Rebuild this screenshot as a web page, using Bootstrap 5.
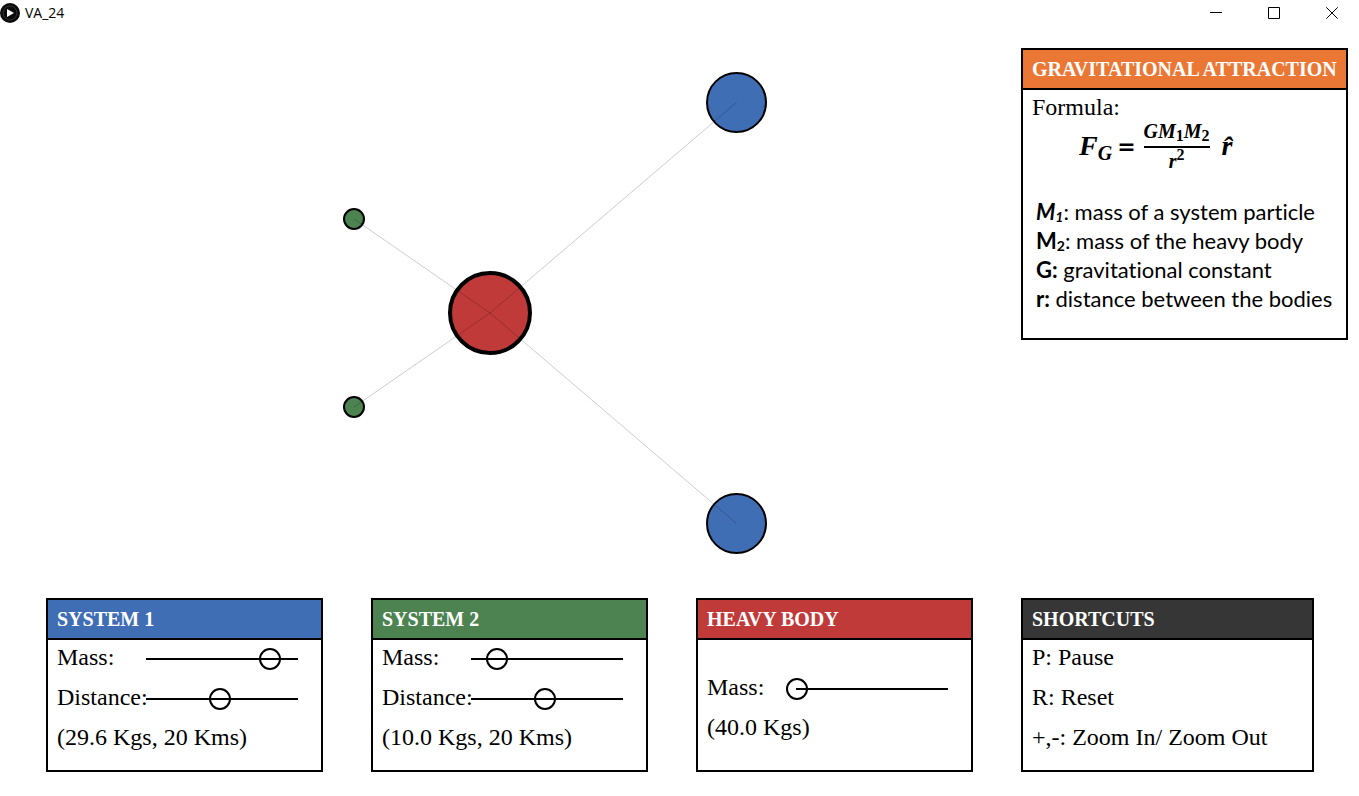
<!DOCTYPE html>
<html lang="en">
<head>
<meta charset="utf-8">
<meta name="viewport" content="width=device-width, initial-scale=1">
<title>VA_24</title>
<link href="https://cdn.jsdelivr.net/npm/bootstrap@5.3.0/dist/css/bootstrap.min.css" rel="stylesheet">
<style>
  body { background: #fff; color: #000; font-family: "Liberation Serif", "Times New Roman", serif; font-size: 24px; }
  .title-bar { height: 27px; padding-bottom: 1px; font-family: "Open Sans", "Segoe UI", sans-serif; font-size: 14px; line-height: 26px; }
  .title-bar .app-name { padding-left: 5px; }
  .win-btn { width: 54px; height: 26px; line-height: 0; }
  .scene { min-width: 0; }
  .formula-col { padding: 21px 11px 0 0; }
  .panel { border: 2px solid #000; border-radius: 0; background: #fff; color: #000; }
  .panel-title { border-bottom: 2px solid #000; border-radius: 0; padding: 0 9px; margin: 0; color: #fff; font-size: 20px; font-weight: 700; line-height: 38px; white-space: nowrap; }
  .bg-orange { background: #eb7735; }
  .bg-blue { background: #406eb5; }
  .bg-green { background: #4c8350; }
  .bg-red { background: #c03a3a; }
  .bg-coal { background: #363636; }
  .panel-rows { min-height: 130px; padding: 0 13px 0 9px; gap: 2px; }
  .panel-rows.lowered { padding-top: 30px; }
  .line-item { height: 38px; line-height: 34px; white-space: nowrap; }
  .slider-row { display: grid; grid-template-columns: 79px 1fr; }
  .slider {
    height: 38px; width: 100%; min-width: 0;
    background: linear-gradient(#000, #000) center / calc(100% - 20px) 2px no-repeat;
  }
  .slider::-webkit-slider-runnable-track { background: transparent; height: 22px; }
  .slider::-webkit-slider-thumb { width: 22px; height: 22px; margin-top: 0; background: transparent; border: 2px solid #000; }
  .slider::-webkit-slider-thumb:active { background: transparent; }
  .slider::-moz-range-track { background: transparent; }
  .slider::-moz-range-thumb { width: 22px; height: 22px; background: transparent; border: 2px solid #000; }
  .panels { padding: 0 13px 24px 46px; }
  .panels > div { padding-right: 48px; }
  .panels > div:last-child { padding-right: 32px; }
  .formula-body { width: 323px; min-height: 248px; padding: 0 9px; }
  .equation { padding-left: 47px; height: 48px; margin-top: -6px; font-weight: 700; font-style: italic; font-size: 28px; line-height: 28px; }
  .equation sub, .equation sup { line-height: 0; }
  .equation .big-sub { font-size: 20px; }
  .equation .equals { font-family: "DejaVu Serif", serif; font-size: 22px; font-style: normal; font-weight: 700; margin: 0 8px 0 5px; }
  .fraction { font-size: 20px; margin-right: 12px; }
  .fraction sub, .fraction sup { font-size: 16px; font-style: normal; }
  .fraction sub { bottom: -3px; }
  .fraction .over { border-bottom: 2px solid #000; line-height: 22px; padding-bottom: 4px; }
  .fraction .under { line-height: 24px; padding-top: 1px; height: 24px; }
  .legend-list { margin: 27px 0 0 4px; font-family: Lato, Carlito, Calibri, sans-serif; font-size: 22px; font-variant-ligatures: none; line-height: 29px; white-space: nowrap; }
  .legend-list sub { font-size: 14px; line-height: 0; bottom: -2px; }
</style>
</head>
<body>
<header class="title-bar d-flex align-items-center">
  <svg width="20" height="20" viewBox="0 0 20 20" aria-hidden="true">
    <circle cx="10" cy="10" r="10" fill="#0b0b0b"/>
    <circle cx="10" cy="10" r="7" fill="none" stroke="#333" stroke-width="1"/>
    <path d="M7 6l7 4-7 4z" fill="#fff"/>
  </svg>
  <span class="app-name flex-grow-1">VA_24</span>
  <div class="d-flex gap-1">
    <button type="button" class="win-btn btn p-0 border-0 rounded-0" aria-label="Minimize">
      <svg width="12" height="12" viewBox="0 0 12 12"><path d="M0 5.5h12" stroke="#000"/></svg>
    </button>
    <button type="button" class="win-btn btn p-0 border-0 rounded-0" aria-label="Maximize">
      <svg width="12" height="12" viewBox="0 0 12 12"><path d="M.5.5h11v11H.5z" fill="none" stroke="#000"/></svg>
    </button>
    <button type="button" class="win-btn btn p-0 border-0 rounded-0" aria-label="Close">
      <svg width="12" height="12" viewBox="0 0 12 12"><path d="M.3.3l11.4 11.4M11.7.3L.3 11.7" stroke="#000"/></svg>
    </button>
  </div>
</header>

<main>
  <section class="d-flex align-items-start">
    <div class="scene flex-grow-1">
      <svg class="d-block w-100" viewBox="0 0 1021 571" role="img" aria-label="Four particles attracted to a heavy body">
        <g stroke="#000" stroke-width="2">
          <circle cx="736.5" cy="75.5" r="29.5" fill="#406eb5"/>
          <circle cx="736.5" cy="496.5" r="29.5" fill="#406eb5"/>
          <circle cx="354" cy="192" r="10" fill="#4c8350"/>
          <circle cx="354" cy="380" r="10" fill="#4c8350"/>
          <circle cx="490" cy="286" r="40" fill="#c03a3a" stroke-width="4"/>
        </g>
        <path d="M736.5 75.5L490 286L736.5 496.5M354 192L490 286L354 380" fill="none" stroke="#000" stroke-opacity=".2"/>
      </svg>
    </div>
    <div class="formula-col flex-shrink-0">
      <div class="panel card">
        <h2 class="panel-title bg-orange">GRAVITATIONAL ATTRACTION</h2>
        <div class="formula-body">
          <div class="line-item">Formula:</div>
          <div class="equation d-flex align-items-center">
            <span>F<sub class="big-sub">G</sub></span>
            <span class="equals">=</span>
            <span class="fraction d-flex flex-column text-center">
              <span class="over">GM<sub>1</sub>M<sub>2</sub></span>
              <span class="under">r<sup>2</sup></span>
            </span>
            <span>r&#770;</span>
          </div>
          <ul class="legend-list list-unstyled">
            <li><b><i>M<sub>1</sub></i></b>: mass of a system particle</li>
            <li><b>M<sub>2</sub></b>: mass of the heavy body</li>
            <li><b>G:</b> gravitational constant</li>
            <li><b>r:</b> distance between the bodies</li>
          </ul>
        </div>
      </div>
    </div>
  </section>

  <section class="panels row g-0 row-cols-1 row-cols-sm-2 row-cols-xl-4">
    <div class="col">
      <div class="panel card">
        <h2 class="panel-title bg-blue">SYSTEM 1</h2>
        <div class="panel-rows d-flex flex-column">
          <div class="line-item slider-row">
            <label for="mass1">Mass:</label>
            <input id="mass1" class="form-range slider" type="range" min="5" max="35" step="0.1" value="29.6">
          </div>
          <div class="line-item slider-row">
            <label for="dist1">Distance:</label>
            <input id="dist1" class="form-range slider" type="range" min="0" max="41" value="20">
          </div>
          <div class="line-item">(29.6 Kgs, 20 Kms)</div>
        </div>
      </div>
    </div>
    <div class="col">
      <div class="panel card">
        <h2 class="panel-title bg-green">SYSTEM 2</h2>
        <div class="panel-rows d-flex flex-column">
          <div class="line-item slider-row">
            <label for="mass2">Mass:</label>
            <input id="mass2" class="form-range slider" type="range" min="5" max="35" step="0.1" value="10">
          </div>
          <div class="line-item slider-row">
            <label for="dist2">Distance:</label>
            <input id="dist2" class="form-range slider" type="range" min="0" max="41" value="20">
          </div>
          <div class="line-item">(10.0 Kgs, 20 Kms)</div>
        </div>
      </div>
    </div>
    <div class="col">
      <div class="panel card">
        <h2 class="panel-title bg-red">HEAVY BODY</h2>
        <div class="panel-rows lowered d-flex flex-column">
          <div class="line-item slider-row">
            <label for="mass3">Mass:</label>
            <input id="mass3" class="form-range slider" type="range" min="40" max="100" step="0.1" value="40">
          </div>
          <div class="line-item">(40.0 Kgs)</div>
        </div>
      </div>
    </div>
    <div class="col">
      <div class="panel card">
        <h2 class="panel-title bg-coal">SHORTCUTS</h2>
        <div class="panel-rows d-flex flex-column">
          <div class="line-item">P: Pause</div>
          <div class="line-item">R: Reset</div>
          <div class="line-item">+,-: Zoom In/ Zoom Out</div>
        </div>
      </div>
    </div>
  </section>
</main>
<script src="https://cdn.jsdelivr.net/npm/bootstrap@5.3.0/dist/js/bootstrap.bundle.min.js"></script>
</body>
</html>
